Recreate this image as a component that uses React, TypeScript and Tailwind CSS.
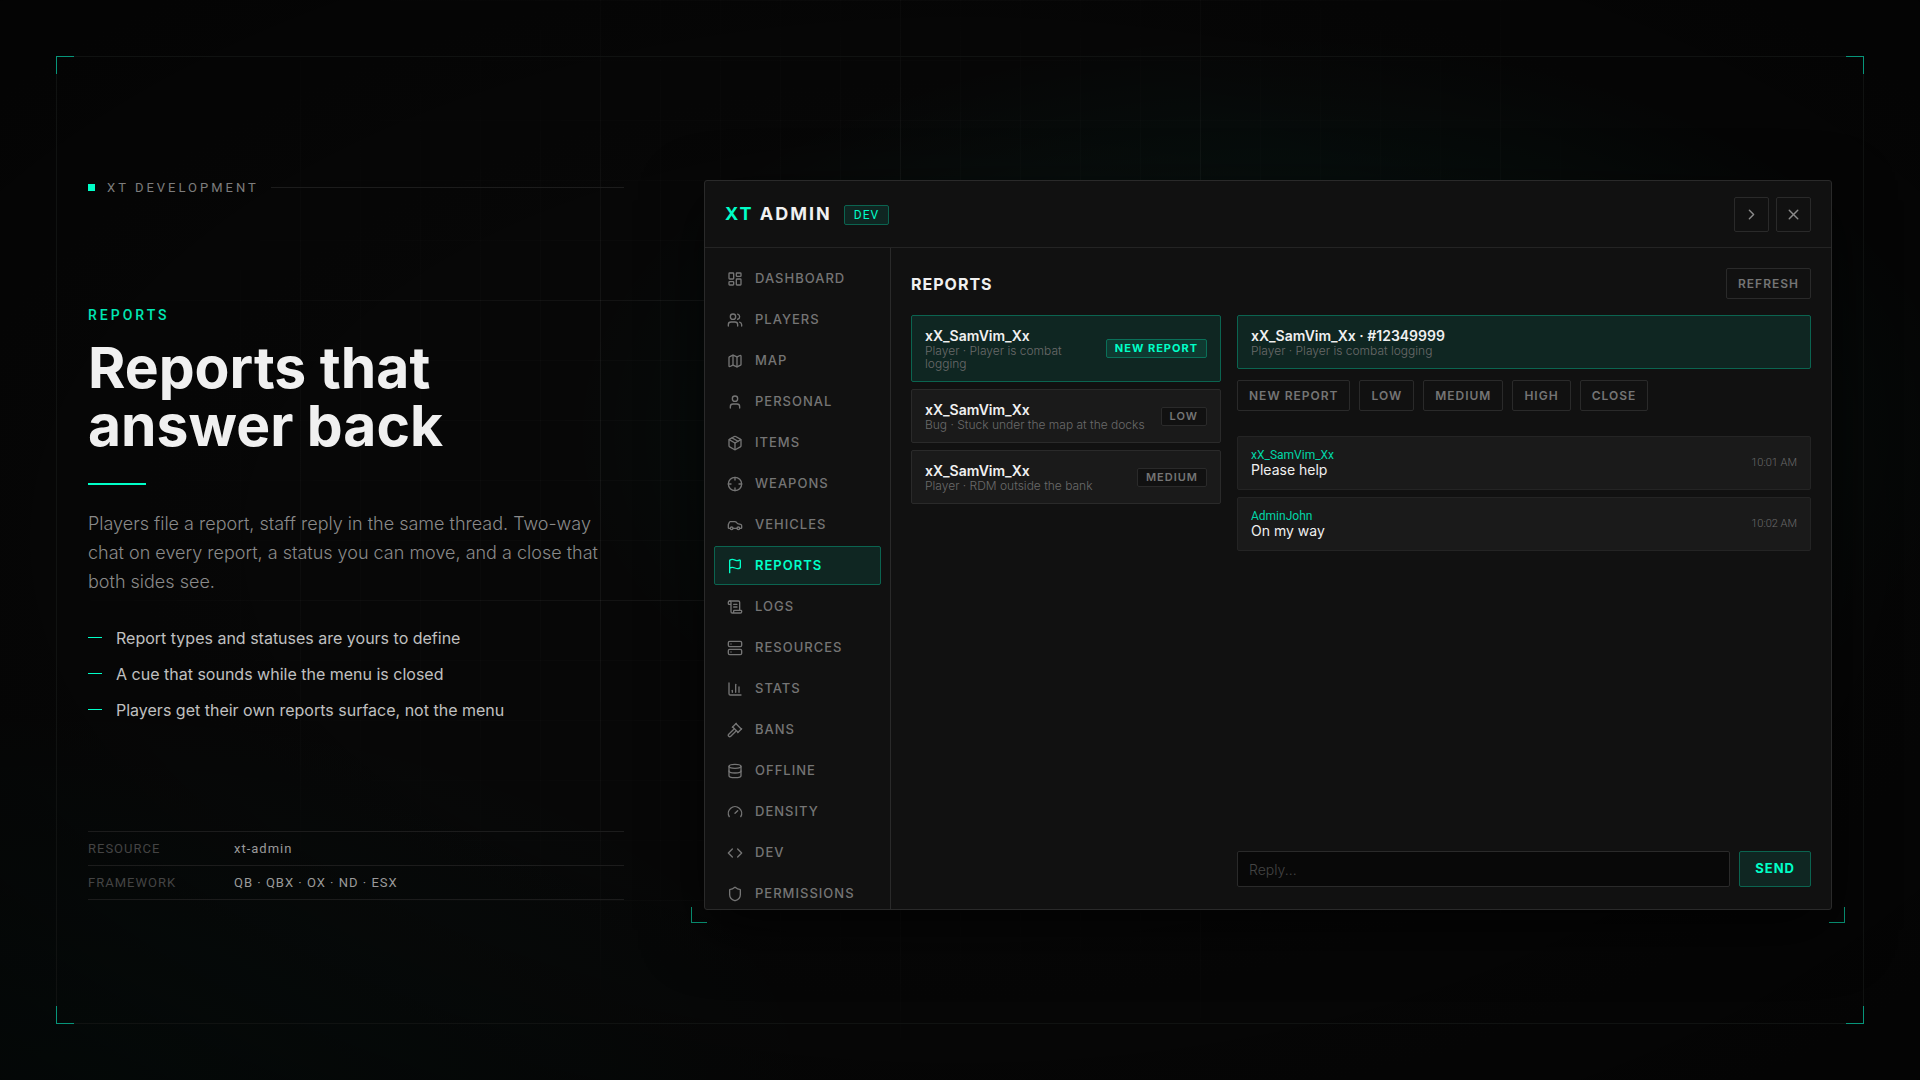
import React from "react";
import {
  ChartColumn,
  ChevronRight,
  Car,
  Code,
  Crosshair,
  Database,
  Flag,
  Gauge,
  Gavel,
  LayoutDashboard,
  Map as MapIcon,
  Package,
  ScrollText,
  Server,
  Shield,
  User,
  Users,
  X,
  type LucideIcon,
} from "lucide-react";

const NAV: { label: string; icon: LucideIcon }[] = [
  { label: "Dashboard", icon: LayoutDashboard },
  { label: "Players", icon: Users },
  { label: "Map", icon: MapIcon },
  { label: "Personal", icon: User },
  { label: "Items", icon: Package },
  { label: "Weapons", icon: Crosshair },
  { label: "Vehicles", icon: Car },
  { label: "Reports", icon: Flag },
  { label: "Logs", icon: ScrollText },
  { label: "Resources", icon: Server },
  { label: "Stats", icon: ChartColumn },
  { label: "Bans", icon: Gavel },
  { label: "Offline", icon: Database },
  { label: "Density", icon: Gauge },
  { label: "Dev", icon: Code },
  { label: "Permissions", icon: Shield },
];

const REPORTS = [
  { name: "xX_SamVim_Xx", detail: "Player · Player is combat logging", status: "New report", active: true },
  { name: "xX_SamVim_Xx", detail: "Bug · Stuck under the map at the docks", status: "Low", active: false },
  { name: "xX_SamVim_Xx", detail: "Player · RDM outside the bank", status: "Medium", active: false },
];

const STATUSES = ["New report", "Low", "Medium", "High", "Close"];

const MESSAGES = [
  { from: "xX_SamVim_Xx", text: "Please help", time: "10:01 AM" },
  { from: "AdminJohn", text: "On my way", time: "10:02 AM" },
];

const FEATURES = [
  "Report types and statuses are yours to define",
  "A cue that sounds while the menu is closed",
  "Players get their own reports surface, not the menu",
];

function Backdrop() {
  return (
    <div aria-hidden="true" className="pointer-events-none absolute inset-0">
      <div className="absolute inset-0 bg-[radial-gradient(ellipse_700px_400px_at_66%_40%,rgba(0,255,200,0.09),transparent),radial-gradient(ellipse_760px_380px_at_4%_100%,rgba(0,220,190,0.035),transparent)]" />
      <div className="absolute inset-0 bg-[linear-gradient(to_right,rgba(255,255,255,0.018)_1px,transparent_1px),linear-gradient(to_bottom,rgba(255,255,255,0.018)_1px,transparent_1px),linear-gradient(to_right,rgba(255,255,255,0.04)_1px,transparent_1px),linear-gradient(to_bottom,rgba(255,255,255,0.04)_1px,transparent_1px)] bg-[size:60px_60px,60px_60px,300px_300px,300px_300px] [mask-image:radial-gradient(ellipse_50%_58%_at_50%_42%,black_35%,transparent_100%)]" />
      <div className="absolute inset-0 bg-[radial-gradient(ellipse_at_center,transparent_45%,rgba(0,0,0,0.5)_100%)]" />
      <div className="absolute inset-14 border border-[#101211]">
        <span className="absolute -top-px -left-px size-[18px] border-t border-l border-[#07957a]" />
        <span className="absolute -top-px -right-px size-[18px] border-t border-r border-[#07957a]" />
        <span className="absolute -bottom-px -left-px size-[18px] border-b border-l border-[#07957a]" />
        <span className="absolute -right-px -bottom-px size-[18px] border-r border-b border-[#07957a]" />
      </div>
    </div>
  );
}

function Intro() {
  return (
    <section className="flex w-[536px] shrink-0 flex-col justify-between pb-[10px]">
      <div className="flex h-[15px] items-center font-[Roboto,sans-serif] text-[13px] tracking-[3px] text-[#7d7d7d]">
        <span className="mr-3 size-[7px] bg-[#00ffc8]" />
        <span>XT DEVELOPMENT</span>
        <span className="ml-3 h-px flex-1 bg-[#1c1c1c]" />
      </div>

      <div>
        <p className="font-[Roboto,sans-serif] text-sm leading-4 font-medium tracking-[3px] text-[#00e6b4] uppercase">
          Reports
        </p>
        <h1 className="mt-4 text-[57px] leading-[58px] font-bold text-[#f0f0f0]">
          Reports that
          <br />
          answer back
        </h1>
        <div className="mt-7 h-0.5 w-[58px] bg-[#00ffc8]" />
        <p className="mt-6 text-lg leading-[29px] font-light text-[#8a8a8a]">
          Players file a report, staff reply in the same thread. Two-way
          <br />
          chat on every report, a status you can move, and a close that
          <br />
          both sides see.
        </p>
        <ul className="mt-8 flex flex-col gap-4 text-base leading-5 text-[#c0c0c0]">
          {FEATURES.map((feature) => (
            <li key={feature} className="flex items-center gap-3.5">
              <span className="h-px w-3.5 bg-[#00ffc8]" />
              {feature}
            </li>
          ))}
        </ul>
      </div>

      <dl className="border-t border-[#1c1c1c] font-[Roboto,sans-serif] text-[13px] leading-[33px] tracking-[1px]">
        <div className="flex border-b border-[#1c1c1c]">
          <dt className="w-[146px] text-[#444]">RESOURCE</dt>
          <dd className="text-[#9a9a9a]">xt-admin</dd>
        </div>
        <div className="flex border-b border-[#1c1c1c]">
          <dt className="w-[146px] text-[#444]">FRAMEWORK</dt>
          <dd className="text-[#9a9a9a]">QB · QBX · OX · ND · ESX</dd>
        </div>
      </dl>
    </section>
  );
}

function Sidebar() {
  return (
    <nav className="w-[186px] shrink-0 overflow-hidden border-r border-[#2a2a2a] px-[9px] py-[11px]">
      <ul className="flex flex-col gap-0.5">
        {NAV.map(({ label, icon: Icon }) => {
          const active = label === "Reports";
          return (
            <li key={label}>
              <a
                href={`#${label.toLowerCase()}`}
                aria-current={active ? "page" : undefined}
                className={`flex h-[39px] items-center gap-3 rounded-xs border px-3 text-[13px] tracking-[1px] uppercase ${
                  active
                    ? "border-[#0b6450] bg-[#0f2622] font-semibold text-[#00ffc8]"
                    : "border-transparent font-medium text-[#757575]"
                }`}
              >
                <Icon size={16} strokeWidth={2} className="shrink-0" />
                {label}
              </a>
            </li>
          );
        })}
      </ul>
    </nav>
  );
}

function ReportList() {
  return (
    <ul className="flex w-[310px] shrink-0 flex-col gap-[7px]">
      {REPORTS.map((report) => (
        <li key={report.detail} className="flex">
          <button
            type="button"
            className={`flex w-full items-center justify-between gap-2 rounded-xs border px-[13px] py-[11px] text-left ${
              report.active ? "border-[#0b6450] bg-[#0f2622]" : "border-[#2a2a2a] bg-[#1a1a1a]"
            }`}
          >
            <span className="flex flex-col">
              <span className="text-sm leading-[17px] font-semibold text-[#f0f0f0]">{report.name}</span>
              <span className="text-xs leading-[13px] font-light text-[#6a6a6a]">{report.detail}</span>
            </span>
            <span
              className={`shrink-0 rounded-xs border px-2 text-[11px] leading-[17px] tracking-[1px] whitespace-nowrap uppercase ${
                report.active
                  ? "border-[#0a7059] bg-[#0f3a31] font-bold text-[#00ffc8]"
                  : "border-[#2a2a2a] bg-[#111] font-semibold text-[#757575]"
              }`}
            >
              {report.status}
            </span>
          </button>
        </li>
      ))}
    </ul>
  );
}

function Thread() {
  return (
    <section className="flex min-w-0 flex-1 flex-col">
      <header className="rounded-xs border border-[#0b6450] bg-[#0f2622] px-[13px] py-[11px]">
        <h3 className="text-sm leading-[17px] font-semibold text-[#f0f0f0]">xX_SamVim_Xx · #12349999</h3>
        <p className="text-xs leading-[13px] font-light text-[#6a6a6a]">Player · Player is combat logging</p>
      </header>

      <div className="mt-[11px] flex flex-wrap gap-[9px]">
        {STATUSES.map((status) => (
          <button
            key={status}
            type="button"
            className="h-[31px] rounded-xs border border-[#2a2a2a] px-[11px] text-xs font-semibold tracking-[1px] text-[#757575] uppercase"
          >
            {status}
          </button>
        ))}
      </div>

      <ul className="mt-[25px] flex flex-1 flex-col gap-[7px]">
        {MESSAGES.map((message) => (
          <li
            key={message.time}
            className="flex items-center justify-between rounded-xs border border-[#242424] bg-[#1a1a1a] px-[13px] py-[11px]"
          >
            <div>
              <p className="font-[Roboto,sans-serif] text-xs leading-[14px] text-[#00d6a8]">{message.from}</p>
              <p className="text-sm leading-4 text-[#f0f0f0]">{message.text}</p>
            </div>
            <time className="font-[Roboto,sans-serif] text-[11px] leading-4 font-light text-[#6a6a6a]">{message.time}</time>
          </li>
        ))}
      </ul>

      <form className="flex gap-[9px]" onSubmit={(event) => event.preventDefault()}>
        <input
          type="text"
          aria-label="Reply"
          placeholder="Reply..."
          className="h-9 min-w-0 flex-1 rounded-xs border border-[#2a2a2a] bg-[#080808] px-[11px] text-sm text-[#f0f0f0] placeholder:font-light placeholder:text-[#444]"
        />
        <button
          type="submit"
          className="h-9 rounded-xs border border-[#0b6450] bg-[#0f2622] px-[15px] text-[13px] font-bold tracking-[1px] text-[#00ffc8]"
        >
          SEND
        </button>
      </form>
    </section>
  );
}

function AdminPanel() {
  return (
    <div className="relative min-w-0 flex-1">
      <div className="relative flex h-full flex-col overflow-hidden rounded-[3px] border border-[#2a2a2a] bg-[#111] shadow-[0_20px_60px_rgba(0,0,0,0.7)]">
        <header className="flex h-[67px] shrink-0 items-center border-b border-[#242424] px-5">
          <h2 className="text-lg leading-6 font-bold tracking-[2px] text-[#f0f0f0]">
            <span className="text-[#00ffc8]">XT</span> ADMIN
          </h2>
          <span className="mt-0.5 ml-3 rounded-xs border border-[#0b6450] bg-[#0f2622] px-[9px] font-[Roboto,sans-serif] text-xs leading-[18px] tracking-[1px] text-[#00ffc8]">
            DEV
          </span>
          <div className="ml-auto flex gap-[7px] text-[#8a8a8a]">
            <button type="button" aria-label="Next" className="grid size-[35px] place-items-center rounded-xs border border-[#2a2a2a]">
              <ChevronRight size={17} strokeWidth={2} />
            </button>
            <button type="button" aria-label="Close" className="grid size-[35px] place-items-center rounded-xs border border-[#2a2a2a]">
              <X size={17} strokeWidth={2} />
            </button>
          </div>
        </header>

        <div className="flex min-h-0 flex-1">
          <Sidebar />
          <main className="flex min-w-0 flex-1 flex-col px-5 pt-5 pb-[22px]">
            <div className="flex items-center justify-between">
              <h2 className="text-base font-bold tracking-[1px] text-[#f0f0f0]">REPORTS</h2>
              <button
                type="button"
                className="h-[31px] rounded-xs border border-[#2a2a2a] px-[11px] text-xs font-semibold tracking-[1px] text-[#757575]"
              >
                REFRESH
              </button>
            </div>
            <div className="mt-4 flex min-h-0 flex-1 gap-4">
              <ReportList />
              <Thread />
            </div>
          </main>
        </div>
      </div>
      <span className="absolute -bottom-[13px] -left-[13px] size-4 border-b border-l border-[#07886c]" />
      <span className="absolute -right-[13px] -bottom-[13px] size-4 border-r border-b border-[#07886c]" />
    </div>
  );
}

export default function App() {
  return (
    <div className="relative flex h-screen overflow-hidden bg-[#070707] font-[Inter,sans-serif]">
      <Backdrop />
      <div className="relative flex min-w-0 flex-1 gap-20 px-[88px] pt-[180px] pb-[170px]">
        <Intro />
        <AdminPanel />
      </div>
    </div>
  );
}
